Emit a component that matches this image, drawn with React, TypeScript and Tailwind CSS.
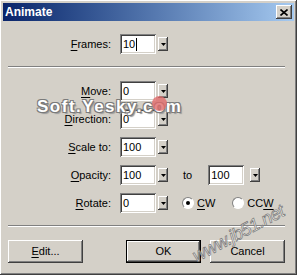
import React from "react";

const sunken =
  "bg-white shadow-[inset_1px_1px_#808080,inset_-1px_-1px_#ffffff,inset_2px_2px_#404040,inset_-2px_-2px_#d4d0c8]";
const raised =
  "bg-[#d4d0c8] shadow-[inset_-1px_-1px_#404040,inset_1px_1px_#ffffff,inset_-2px_-2px_#808080,inset_2px_2px_#d4d0c8]";

function Drop() {
  return (
    <div className={`ml-[2px] flex h-[14px] w-[10px] items-center justify-center ${raised}`}>
      <svg width="5" height="3" viewBox="0 0 5 3">
        <path d="M0 0h5L2.5 3z" fill="#000" />
      </svg>
    </div>
  );
}

function Field({ value, caret }: { value: string; caret?: boolean }) {
  return (
    <div className={`flex h-[20px] w-[36px] items-center pl-[3px] ${sunken}`}>
      <span className="leading-none">{value}</span>
      {caret && <span className="ml-[1px] h-[13px] w-px bg-black" />}
    </div>
  );
}

function Label({ pre, u, post }: { pre?: string; u: string; post: string }) {
  return (
    <div className="w-[108px] text-right">
      {pre}
      <span className="underline underline-offset-2">{u}</span>
      {post}
    </div>
  );
}

function Row({
  label,
  value,
  caret,
  children,
  className = "mt-[8px]",
}: {
  label: React.ReactNode;
  value: string;
  caret?: boolean;
  children?: React.ReactNode;
  className?: string;
}) {
  return (
    <div className={`flex h-[20px] items-center ${className}`}>
      {label}
      <div className="ml-[9px]">
        <Field value={value} caret={caret} />
      </div>
      <Drop />
      {children}
    </div>
  );
}

function Radio({ checked }: { checked?: boolean }) {
  return (
    <div className="flex h-[12px] w-[12px] items-center justify-center rounded-full border border-t-[#808080] border-l-[#808080] border-r-white border-b-white bg-white">
      {checked && <div className="h-[4px] w-[4px] rounded-full bg-black" />}
    </div>
  );
}

function Separator({ className }: { className: string }) {
  return (
    <div className={`ml-[5px] w-[277px] ${className}`}>
      <div className="h-px bg-[#808080]" />
      <div className="h-px bg-white" />
    </div>
  );
}

export default function App() {
  return (
    <div
      className={`relative h-[275px] w-[297px] overflow-hidden p-[3px] text-[11px] text-black ${raised}`}
      style={{ fontFamily: '"Liberation Sans", Arial, sans-serif' }}
    >
      <div className="flex h-[18px] items-center justify-between bg-gradient-to-r from-[#0a246a] to-[#a6caf0] pl-[2px] pr-[2px]">
        <span className="text-[12px] font-bold text-white">Animate</span>
        <div className={`flex h-[14px] w-[16px] items-center justify-center ${raised}`}>
          <svg width="8" height="7" viewBox="0 0 8 7">
            <path d="M0.5 0.5L7.5 6.5M7.5 0.5L0.5 6.5" stroke="#000" strokeWidth="1.6" />
          </svg>
        </div>
      </div>

      <Row className="mt-[13px]" label={<Label u="F" post="rames:" />} value="10" caret />

      <Separator className="mt-[12px]" />

      <Row className="mt-[13px]" label={<Label u="M" post="ove:" />} value="0" />
      <Row label={<Label u="D" post="irection:" />} value="0" />
      <Row label={<Label u="S" post="cale to:" />} value="100" />
      <Row label={<Label u="O" post="pacity:" />} value="100">
        <span className="ml-[15px]">to</span>
        <div className="ml-[16px]">
          <Field value="100" />
        </div>
        <div className="ml-[4px]">
          <Drop />
        </div>
      </Row>
      <Row label={<Label u="R" post="otate:" />} value="0">
        <div className="ml-[14px] flex items-center">
          <Radio checked />
          <span className="ml-[3px]">
            <span className="underline underline-offset-2">C</span>W
          </span>
        </div>
        <div className="ml-[17px] flex items-center">
          <Radio />
          <span className="ml-[3px]">
            CC<span className="underline underline-offset-2">W</span>
          </span>
        </div>
      </Row>

      <Separator className="mt-[12px]" />

      <div className="mt-[13px] flex h-[23px] items-stretch">
        <button className={`ml-[5px] w-[75px] ${raised}`}>
          <span className="underline underline-offset-2">E</span>dit...
        </button>
        <button className="ml-[43px] w-[75px] border border-black">
          <div className={`flex h-full w-full items-center justify-center ${raised}`}>OK</div>
        </button>
        <button className={`ml-[9px] w-[75px] ${raised}`}>Cancel</button>
      </div>

      <div className="pointer-events-none absolute left-[37px] top-[94px] flex items-center text-[17px] font-bold tracking-[1.5px] text-white [text-shadow:1px_1px_0_#7a7a7a,-1px_-1px_0_#7a7a7a,1px_-1px_0_#7a7a7a,-1px_1px_0_#7a7a7a,2px_2px_1px_#999]">
        Soft.Yesky.c
        <span className="relative">
          o
          <span className="absolute left-[-2px] top-[2px] h-[15px] w-[15px] rounded-full bg-[#e06a6a]/80" />
        </span>
        m
      </div>

      <div className="pointer-events-none absolute left-[194px] top-[244px] origin-left -rotate-[28deg] text-[18px] italic tracking-[-0.5px] text-white/70 [-webkit-text-stroke:0.7px_#777]">
        www.jb51.net
      </div>
    </div>
  );
}
